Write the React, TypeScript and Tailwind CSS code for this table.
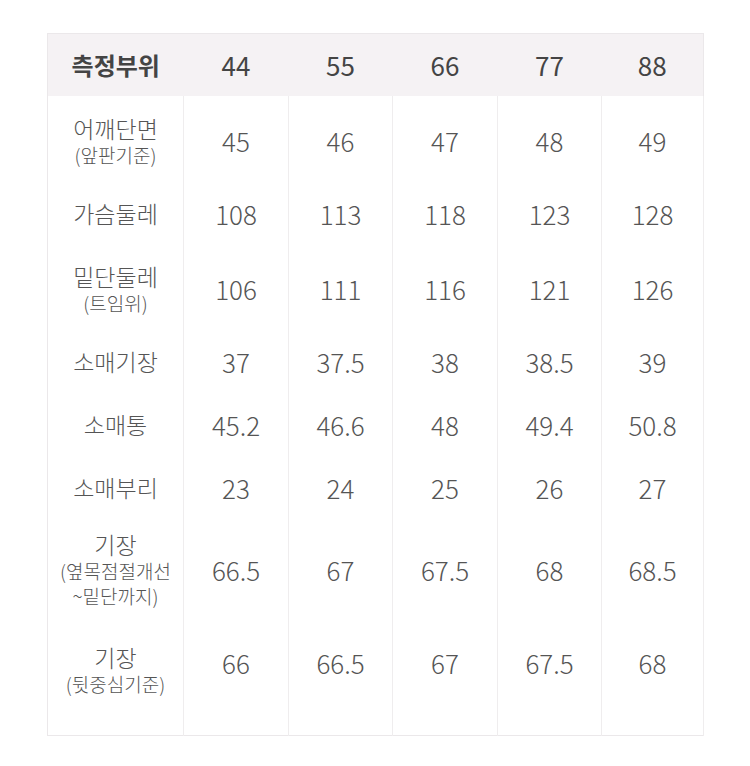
import React from "react";

const sizes = ["44", "55", "66", "77", "88"];

const rows: { label: string; sub?: string[]; values: string[]; h: string; pad?: string }[] = [
  { label: "어깨단면", sub: ["(앞판기준)"], values: ["45", "46", "47", "48", "49"], h: "h-[90px]" },
  { label: "가슴둘레", values: ["108", "113", "118", "123", "128"], h: "h-[56px]" },
  { label: "밑단둘레", sub: ["(트임위)"], values: ["106", "111", "116", "121", "126"], h: "h-[94px]" },
  { label: "소매기장", values: ["37", "37.5", "38", "38.5", "39"], h: "h-[52px]" },
  { label: "소매통", values: ["45.2", "46.6", "48", "49.4", "50.8"], h: "h-[74px]" },
  { label: "소매부리", values: ["23", "24", "25", "26", "27"], h: "h-[52px]" },
  {
    label: "기장",
    sub: ["(옆목점절개선", "~밑단까지)"],
    values: ["66.5", "67", "67.5", "68", "68.5"],
    h: "h-[112px]",
  },
  {
    label: "기장",
    sub: ["(뒷중심기준)"],
    values: ["66", "66.5", "67", "67.5", "68"],
    h: "h-[74px]",
    pad: "pt-[14px]",
  },
];

const colW = ["w-[136px]", "w-[105px]", "w-[104px]", "w-[105px]", "w-[104px]", "w-[102px]"];

export default function App() {
  return (
    <div
      className="w-[750px] h-[766px] bg-white pt-[33px] pl-[47px]"
      style={{ fontFamily: '"Noto Sans CJK KR", "Noto Sans", sans-serif' }}
    >
      <table className="w-[656px] border-collapse border border-[#ebe8ea] table-fixed">
        <colgroup>
          {colW.map((w, i) => (
            <col key={i} className={w} />
          ))}
        </colgroup>
        <thead>
          <tr className="h-[62px] bg-[#f5f2f4]">
            <th className="text-[24px] font-bold text-[#444] text-center align-middle">측정부위</th>
            {sizes.map((s) => (
              <th key={s} className="text-[26px] font-normal text-[#444] text-center align-middle">
                {s}
              </th>
            ))}
          </tr>
        </thead>
        <tbody>
          {rows.map((r, i) => (
            <tr key={i} className={r.h}>
              <td
                className={`text-center align-middle text-[#555] border-r border-[#efedee] font-light ${
                  r.pad ?? ""
                }`}
              >
                <div className="text-[23px] leading-[27px]">{r.label}</div>
                {r.sub?.map((s) => (
                  <div key={s} className="text-[19px] leading-[25px] whitespace-nowrap">
                    {s}
                  </div>
                ))}
              </td>
              {r.values.map((v, j) => (
                <td
                  key={j}
                  className="text-center align-middle text-[26px] font-light text-[#555] border-r border-[#efedee]"
                >
                  {v}
                </td>
              ))}
            </tr>
          ))}
          <tr className="h-[36px]">
            {colW.map((_, j) => (
              <td key={j} className="border-r border-[#efedee]" />
            ))}
          </tr>
        </tbody>
      </table>
    </div>
  );
}
